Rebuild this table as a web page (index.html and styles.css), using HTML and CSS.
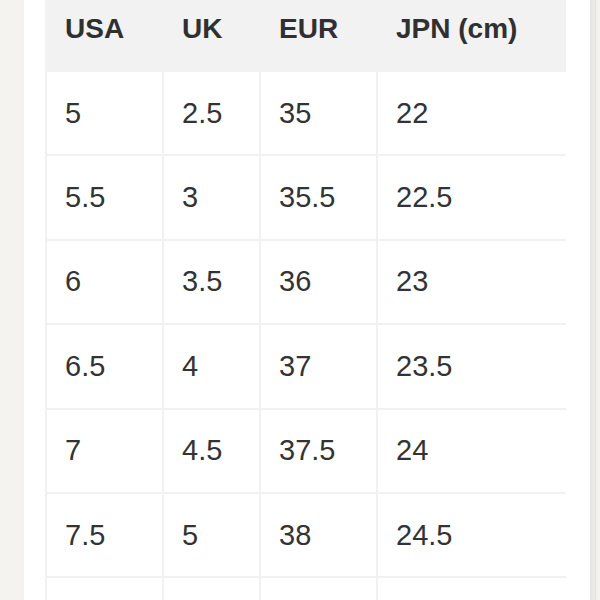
FILE: index.html
```html
<!DOCTYPE html>
<html lang="en">
<head>
<meta charset="utf-8">
<title>Size chart</title>
<link rel="stylesheet" href="styles.css">
</head>
<body>
<main class="panel">
  <div class="size-table" role="table">
    <div class="cell head">USA</div>
    <div class="cell head">UK</div>
    <div class="cell head">EUR</div>
    <div class="cell head">JPN (cm)</div>

    <div class="cell">5</div><div class="cell">2.5</div><div class="cell">35</div><div class="cell">22</div>
    <div class="cell">5.5</div><div class="cell">3</div><div class="cell">35.5</div><div class="cell">22.5</div>
    <div class="cell">6</div><div class="cell">3.5</div><div class="cell">36</div><div class="cell">23</div>
    <div class="cell">6.5</div><div class="cell">4</div><div class="cell">37</div><div class="cell">23.5</div>
    <div class="cell">7</div><div class="cell">4.5</div><div class="cell">37.5</div><div class="cell">24</div>
    <div class="cell">7.5</div><div class="cell">5</div><div class="cell">38</div><div class="cell">24.5</div>
    <div class="cell"></div><div class="cell"></div><div class="cell"></div><div class="cell"></div>
  </div>
</main>
</body>
</html>
```

FILE: styles.css
```css
html, body {
  margin: 0;
  padding: 0;
  height: 100%;
  overflow: hidden;
}

body {
  background: #f4f3ef;
  font-family: "Liberation Sans", Arial, sans-serif;
  color: #333333;
}

.panel {
  box-sizing: border-box;
  width: 566px;
  min-height: 700px;
  margin: -12.4px 0 0 24px;
  padding-left: 21px;
  background: #ffffff;
  box-shadow: 3px 0 5px rgba(0, 0, 0, 0.06), 6px 0 0 -1px #f1f0ec, 6px 0 0 0 #e2e1dd;
}

.size-table {
  display: grid;
  grid-template-columns: 117px 97px 117px 190px;
  grid-auto-rows: 84.4px;
}

.cell {
  box-sizing: border-box;
  display: flex;
  align-items: center;
  padding-left: 18px;
  font-size: 29px;
  border-left: 2px solid #f1f1f1;
  border-bottom: 2px solid #f1f1f1;
  white-space: nowrap;
}

.cell.head {
  background: #f2f2f2;
  border: none;
  padding-left: 20px;
  font-size: 28px;
  font-weight: 700;
  padding-bottom: 1px;
  color: #303030;
}
```
